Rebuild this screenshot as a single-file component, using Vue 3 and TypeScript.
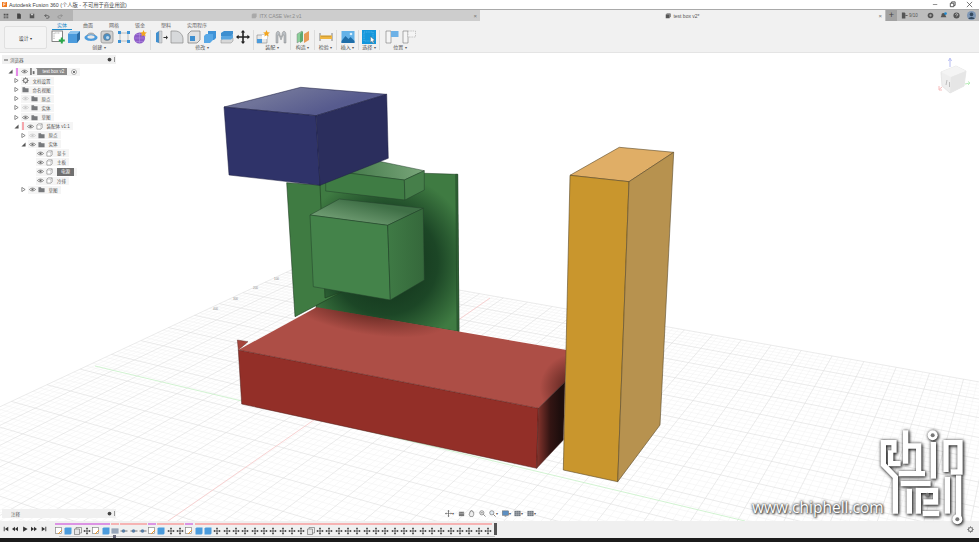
<script setup lang="ts">
type Row = { name: string; depth: number; tri?: 'open' | 'shut'; bar?: string; eye?: 'on' | 'off'; icon: string; cur?: boolean; root?: boolean };
type Group = { label: string; w: number; gap: number; icons: string[]; last?: boolean };
type Seg = { color: string; items: string[] };

// ground grid, projected from two vanishing points
const O = [306, 263];
const VA = [-1805, -110];
const VB = [1100, -110];
const ka = 0.0019;
const kb = 0.00492;

const project = (u: number, v: number) => {
  const w = 1 - u * ka - v * kb;
  const x = (O[0] - u * ka * VA[0] - v * kb * VB[0]) / w;
  const y = (O[1] - u * ka * VA[1] - v * kb * VB[1]) / w;
  return `${x.toFixed(1)} ${y.toFixed(1)}`;
};

let minorGrid = '';
let majorGrid = '';
for (let u = 0; u * ka < 0.97; u++) {
  const seg = `M${project(u, 0)}L${project(u, (0.97 - u * ka) / kb)}`;
  if (u % 5 === 0) majorGrid += seg;
  else minorGrid += seg;
}
for (let v = 0; v * kb < 0.97; v++) {
  const seg = `M${project(0, v)}L${project((0.97 - v * kb) / ka, v)}`;
  if (v % 5 === 0) majorGrid += seg;
  else minorGrid += seg;
}

const ticks = [
  { x: 274, y: 280, t: '100' },
  { x: 253, y: 289, t: '200' },
  { x: 233, y: 300, t: '300' },
  { x: 213, y: 310, t: '400' },
];

const tabs = [
  { name: '实体', w: 26, on: true },
  { name: '曲面', w: 26 },
  { name: '网格', w: 26 },
  { name: '钣金', w: 26 },
  { name: '塑料', w: 26 },
  { name: '实用程序', w: 36 },
];

const groups: Group[] = [
  { label: '创建', w: 103, gap: 2.5, icons: ['sketch', 'extrude', 'revolve', 'hole', 'pattern', 'star'] },
  { label: '修改', w: 103, gap: 2.5, icons: ['press', 'fillet', 'chamfer', 'combine', 'stack', 'move'] },
  { label: '装配', w: 37, gap: 4, icons: ['newcomp', 'joint'] },
  { label: '构造', w: 24, gap: 0, icons: ['plane'] },
  { label: '检验', w: 22, gap: 0, icons: ['measure'] },
  { label: '插入', w: 22, gap: 0, icons: ['picture'] },
  { label: '选择', w: 21, gap: 0, icons: ['select'] },
  { label: '位置', w: 40, gap: 3, icons: ['pos1', 'pos2'], last: true },
];

const rows: Row[] = [
  { name: 'test box v2', depth: 0, tri: 'open', bar: '#e58ae8', eye: 'on', icon: 'doc', root: true },
  { name: '文档设置', depth: 1, tri: 'shut', icon: 'gear' },
  { name: '命名视图', depth: 1, tri: 'shut', icon: 'folder' },
  { name: '原点', depth: 1, tri: 'shut', eye: 'off', icon: 'folder' },
  { name: '实体', depth: 1, tri: 'shut', eye: 'off', icon: 'folder' },
  { name: '草图', depth: 1, tri: 'shut', eye: 'on', icon: 'folder' },
  { name: '装配体 v1:1', depth: 1, tri: 'open', bar: '#f5a6ac', eye: 'on', icon: 'box' },
  { name: '原点', depth: 2, tri: 'shut', eye: 'off', icon: 'folder' },
  { name: '实体', depth: 2, tri: 'open', eye: 'on', icon: 'folder' },
  { name: '显卡', depth: 3, eye: 'on', icon: 'box' },
  { name: '主板', depth: 3, eye: 'on', icon: 'box' },
  { name: '电源', depth: 3, eye: 'on', icon: 'box', cur: true },
  { name: '冷排', depth: 3, eye: 'on', icon: 'box' },
  { name: '草图', depth: 2, tri: 'shut', eye: 'on', icon: 'folder' },
];

const navIcons = [
  { id: 'nav-orbit', caret: true },
  { id: 'nav-pan' },
  { id: 'nav-hand' },
  { id: 'nav-zoom' },
  { id: 'nav-fit', caret: true },
  { id: 'nav-display', caret: true },
  { id: 'nav-grid', caret: true },
  { id: 'nav-grid', caret: true },
];

const moves = (n: number) => Array.from({ length: n }, () => 'tl-move');
const lastMoves = moves(30);
lastMoves[10] = 'tl-box';

const segments: Seg[] = [
  { color: '#dc93e4', items: ['tl-sketch', 'tl-ext', 'tl-box', 'tl-move', 'tl-sketch', 'tl-ext'] },
  { color: '#f6b3b3', items: ['tl-joint'] },
  { color: '#f6b3b3', items: ['tl-arrow', 'tl-arrow', 'tl-arrow'] },
  { color: '#dc93e4', items: ['tl-sketch'] },
  { color: '#f6b3b3', items: ['tl-ext', 'tl-move', 'tl-move'] },
  { color: '#dc93e4', items: ['tl-sketch'] },
  { color: '#f6b3b3', items: ['tl-ext', 'tl-ext', ...lastMoves] },
];
</script>

<template>
  <div class="app">
    <svg class="sprite">
      <symbol id="sketch" viewBox="0 0 14 14">
        <rect x="1" y="1" width="10.5" height="10.5" fill="#fff" stroke="#666" stroke-width=".8" />
        <path d="M3 9V3h6" fill="none" stroke="#888" stroke-width=".7" stroke-dasharray="1 .7" />
        <path d="M9.8 7.5h2v2h2v2h-2v2h-2v-2h-2v-2h2z" fill="#2aa84a" />
      </symbol>
      <symbol id="extrude" viewBox="0 0 14 14">
        <path d="M1 4l3-3h9v8l-3 4H1z" fill="#4b9bdc" />
        <path d="M10 4l3-3v8l-3 4z" fill="#2d6fa8" />
        <path d="M1 4l3-3h9l-3 3z" fill="#8cc4ee" />
      </symbol>
      <symbol id="revolve" viewBox="0 0 14 14">
        <path d="M3 6C3 2 11 2 11 6" fill="#b7bcc2" stroke="#777" stroke-width=".5" />
        <path d="M.5 7.5C.5 3.5 13.5 3.5 13.5 7.5 13.5 12 .5 12 .5 7.5z" fill="#4b9bdc" />
        <ellipse cx="7" cy="7" rx="3.6" ry="1.7" fill="#e8e8e8" />
      </symbol>
      <symbol id="hole" viewBox="0 0 14 14">
        <rect x="1" y="1" width="12" height="12" rx="2" fill="#d2d2d2" stroke="#8a8a8a" stroke-width=".7" />
        <circle cx="7" cy="7" r="3.6" fill="#4b8fc4" stroke="#777" stroke-width=".6" />
        <circle cx="7.6" cy="7.6" r="1.6" fill="#bcd9ee" />
      </symbol>
      <symbol id="pattern" viewBox="0 0 14 14">
        <path d="M3 3h8v8H3z" fill="none" stroke="#999" stroke-width=".6" />
        <path d="M1 1h3v3H1zM10 1h3v3h-3zM1 10h3v3H1zM10 10h3v3h-3z" fill="#3d93d6" />
      </symbol>
      <symbol id="star" viewBox="0 0 14 14">
        <circle cx="6.5" cy="8" r="5.6" fill="#8e5cc9" />
        <path d="M3 4.5h7M1.5 8h10M3 11.5h7M6.5 2.5v11" stroke="#b697e0" stroke-width=".5" />
        <path d="M10.5 0l1 2.2 2.4.3-1.8 1.6.5 2.4-2.1-1.2-2.1 1.2.5-2.4L7.100 2.500l2.400-.3z" fill="#f3a51e" />
      </symbol>
      <symbol id="press" viewBox="0 0 14 14">
        <path d="M2 3l3-2h3v12H5l-3-1z" fill="#3e8fd0" />
        <path d="M5 1h3v12H5z" fill="#cfd3d7" stroke="#888" stroke-width=".4" />
        <path d="M9.500 7h2.500V5.500L14 7.500 12 9.500V8H9.500z" fill="#333" />
      </symbol>
      <symbol id="fillet" viewBox="0 0 14 14">
        <path d="M1 13V1h4c5 0 8 4 8 8v4z" fill="#d7d9db" stroke="#8a8a8a" stroke-width=".7" />
      </symbol>
      <symbol id="chamfer" viewBox="0 0 14 14">
        <path d="M1 4l3-3h9v9l-3 3H1z" fill="#e2e2e2" stroke="#777" stroke-width=".7" />
        <path d="M3 6h5v5H3z" fill="#3e8fd0" />
      </symbol>
      <symbol id="combine" viewBox="0 0 14 14">
        <path d="M5 1h8v7l-2 2H5z" fill="#3e93d8" />
        <path d="M1 6l2-2h7v6l-3 3H1z" fill="#58a8e6" />
      </symbol>
      <symbol id="stack" viewBox="0 0 14 14">
        <path d="M1 10l3-2h9v3l-2 2H1z" fill="#d8d8d8" stroke="#8a8a8a" stroke-width=".5" />
        <path d="M1 6.500l3-2h9v3l-2 2H1z" fill="#5aa6e0" />
        <path d="M1 3l3-2h9v3l-2 2H1z" fill="#3e8fd0" />
      </symbol>
      <symbol id="move" viewBox="0 0 14 14">
        <path d="M7 0l2.200 2.600H7.800V6.200h3.600V4.800L14 7l-2.600 2.200V7.800H7.800v3.600h1.400L7 14l-2.200-2.600h1.400V7.800H2.600v1.400L0 7l2.600-2.200v1.400h3.600V2.600H4.800z" fill="#222" />
      </symbol>
      <symbol id="newcomp" viewBox="0 0 14 14">
        <path d="M1 5h10v8H1z" fill="#e8e8e8" stroke="#888" stroke-width=".6" />
        <path d="M1 9h5v4H1z" fill="#4b9bdc" />
        <path d="M6 5h5v4H6z" fill="#fff" />
        <path d="M10.500 0l1 2.200 2.400.3-1.800 1.600.5 2.400-2.100-1.200-2.100 1.200.5-2.400L7.100 2.500l2.400-.3z" fill="#f3a51e" />
      </symbol>
      <symbol id="joint" viewBox="0 0 14 14">
        <path d="M2 13V5c0-5 4-5 4 0l1 2 1-2c0-5 4-5 4 0v8h-2V5H9L7 10 5 5H4v8z" fill="#b9bec3" stroke="#777" stroke-width=".4" />
      </symbol>
      <symbol id="plane" viewBox="0 0 14 14">
        <path d="M1 4l5-3v9l-5 3z" fill="#8ccf9a" stroke="#777" stroke-width=".4" />
        <path d="M4 4l3-3v10l-3 2z" fill="#5fa872" />
        <path d="M8 4l5-3v9l-5 3z" fill="#e79a57" />
      </symbol>
      <symbol id="measure" viewBox="0 0 14 14">
        <path d="M1 3v8M13 3v8" stroke="#666" stroke-width=".8" />
        <rect x="1" y="5.500" width="12" height="3.500" fill="#f0b640" />
        <path d="M3 5.500v1.500M5 5.500v1.500M7 5.500v1.500M9 5.500v1.500M11 5.500v1.500" stroke="#7a5a1a" stroke-width=".5" />
      </symbol>
      <symbol id="picture" viewBox="0 0 14 14">
        <rect x=".5" y="1" width="13" height="12" fill="#64b2e8" />
        <circle cx="10" cy="4" r="1.300" fill="#d8effc" />
        <path d="M.5 11l4-5 3 3 2-2 4 4v2H.5z" fill="#1f6ea9" />
      </symbol>
      <symbol id="select" viewBox="0 0 14 14">
        <rect x="0" y="0" width="14" height="14" fill="#1497dc" />
        <rect x="2" y="2" width="9" height="9" fill="none" stroke="#8fd3f5" stroke-width=".5" stroke-dasharray="1 .8" />
        <path d="M8.500 6.500l4.500 4-2 .2 1 2.300-1 .5-1-2.300-1.500 1.300z" fill="#fff" stroke="#333" stroke-width=".3" />
      </symbol>
      <symbol id="pos1" viewBox="0 0 14 14">
        <path d="M1 1h5v12H1z" fill="#f5f5f5" stroke="#777" stroke-width=".6" />
        <path d="M6 1h7.500v6H6z" fill="#6db1e6" />
      </symbol>
      <symbol id="pos2" viewBox="0 0 14 14">
        <path d="M1 1h5v12H1z" fill="#f5f5f5" stroke="#777" stroke-width=".6" />
        <path d="M6 1h7.500v6H6z" fill="#f5f5f5" stroke="#999" stroke-width=".5" stroke-dasharray="1.500 .8" />
      </symbol>
      <symbol id="eye" viewBox="0 0 8 8">
        <path d="M.5 4C2 1.800 6 1.800 7.500 4 6 6.200 2 6.200.5 4z" fill="none" stroke="#666" stroke-width=".8" />
        <circle cx="4" cy="4" r="1.200" fill="#666" />
      </symbol>
      <symbol id="eye-off" viewBox="0 0 8 8">
        <path d="M.5 4C2 1.800 6 1.800 7.500 4 6 6.200 2 6.200.5 4z" fill="none" stroke="#c4c4c4" stroke-width=".8" />
        <circle cx="4" cy="4" r="1.200" fill="#c4c4c4" />
      </symbol>
      <symbol id="folder" viewBox="0 0 8 8">
        <path d="M.5 1.500h2.800l.7 1h3.500v4.500H.5z" fill="#77797c" />
      </symbol>
      <symbol id="gear" viewBox="0 0 8 8">
        <circle cx="4" cy="4" r="2.300" fill="none" stroke="#777" stroke-width="1.200" />
        <path d="M4 0v8M0 4h8M1.200 1.200l5.600 5.600M6.800 1.200L1.200 6.800" stroke="#777" stroke-width=".8" stroke-dasharray="1.100 5.800" />
      </symbol>
      <symbol id="box" viewBox="0 0 8 8">
        <path d="M1 2.500L2.500 1H7v4.500L5.500 7H1z" fill="#fff" stroke="#666" stroke-width=".6" />
        <path d="M1 2.500h4.500V7M5.500 2.500L7 1" fill="none" stroke="#888" stroke-width=".4" />
      </symbol>
      <symbol id="doc" viewBox="0 0 8 8">
        <path d="M1 0h4.500L7 1.500V8H1z" fill="#f4f4f4" />
        <path d="M2 3.500h2V7H2z" fill="#6d6d6d" />
      </symbol>
      <symbol id="nav-orbit" viewBox="0 0 8 8">
        <path d="M4 0l1.200 1.500H4.400v2.100h2.100v-.8L8 4 6.500 5.200v-.8H4.400v2.100h.8L4 8 2.800 6.500h.8V4.400H1.500v.8L0 4l1.500-1.200v.8h2.100V1.500h-.8z" fill="#555" />
      </symbol>
      <symbol id="nav-pan" viewBox="0 0 8 8">
        <rect x="1" y="2" width="6" height="5" fill="#777" />
        <path d="M2 1v2M6 1v2M1 4.200h6" stroke="#ddd" stroke-width=".5" />
      </symbol>
      <symbol id="nav-hand" viewBox="0 0 8 8">
        <path d="M2 4V2.200h.8v-1h.9v-.5h.9v.7h.9v1H6.500V5.500L5.500 7.500h-3L1 4.500z" fill="#eee" stroke="#555" stroke-width=".6" />
      </symbol>
      <symbol id="nav-zoom" viewBox="0 0 8 8">
        <circle cx="3.200" cy="3.200" r="2.400" fill="#eee" stroke="#666" stroke-width=".7" />
        <path d="M5 5l2.500 2.500M2 3.200h2.400" stroke="#666" stroke-width=".8" />
      </symbol>
      <symbol id="nav-fit" viewBox="0 0 8 8">
        <circle cx="3.200" cy="3.200" r="2.400" fill="#dfe9f2" stroke="#666" stroke-width=".7" />
        <path d="M5 5l2.500 2.500" stroke="#666" stroke-width=".9" />
      </symbol>
      <symbol id="nav-display" viewBox="0 0 8 8">
        <rect x=".5" y="1" width="7" height="5" fill="#5d8fc2" stroke="#555" stroke-width=".5" />
        <path d="M3 7h2" stroke="#555" stroke-width=".8" />
      </symbol>
      <symbol id="nav-grid" viewBox="0 0 8 8">
        <rect x=".5" y="1" width="7" height="6" fill="#6d7680" />
        <path d="M.5 3h7M.5 5h7M3 1v6M5 1v6" stroke="#ddd" stroke-width=".35" />
      </symbol>
      <symbol id="tl-sketch" viewBox="0 0 8 8">
        <rect x=".5" y=".5" width="6" height="6" fill="#fff" stroke="#777" stroke-width=".6" />
        <path d="M3 7l4-4" stroke="#ef9a2d" stroke-width="1" />
      </symbol>
      <symbol id="tl-ext" viewBox="0 0 8 8">
        <path d="M.5 1.500l1-1h6v6l-1 1h-6z" fill="#4b9bdc" />
      </symbol>
      <symbol id="tl-box" viewBox="0 0 8 8">
        <path d="M.5 2h5v5.500h-5z" fill="#e6e6e6" stroke="#666" stroke-width=".6" />
        <path d="M2 2V.5h5.500V6H5.500" fill="none" stroke="#666" stroke-width=".6" />
      </symbol>
      <symbol id="tl-move" viewBox="0 0 8 8">
        <path d="M4 .5v7M.5 4h7M3 1.500h2M3 6.500h2M1.500 3v2M6.500 3v2" stroke="#444" stroke-width=".8" />
      </symbol>
      <symbol id="tl-joint" viewBox="0 0 8 8">
        <rect x=".5" y="1.500" width="7" height="5" fill="#7c8fa8" />
        <path d="M.5 3h7M.5 5h7" stroke="#e8e8e8" stroke-width=".5" />
      </symbol>
      <symbol id="tl-arrow" viewBox="0 0 8 8">
        <path d="M.5 4h7" stroke="#555" stroke-width=".8" />
        <circle cx="3.500" cy="4" r="1.700" fill="#5a7fa6" />
      </symbol>
      <symbol id="ctl-first" viewBox="0 0 8 8"><path d="M1 1h1.200v6H1zM7 1v6L2.500 4z" fill="#333" /></symbol>
      <symbol id="ctl-prev" viewBox="0 0 8 8"><path d="M4 1v6L0 4zM8 1v6L4 4z" fill="#333" /></symbol>
      <symbol id="ctl-play" viewBox="0 0 8 8"><path d="M1.500 .5v7L7.500 4z" fill="#333" /></symbol>
      <symbol id="ctl-next" viewBox="0 0 8 8"><path d="M0 1v6l4-3zM4 1v6l4-3z" fill="#333" /></symbol>
      <symbol id="ctl-last" viewBox="0 0 8 8"><path d="M1 1v6l4.500-3zM5.800 1H7v6H5.800z" fill="#333" /></symbol>
    </svg>

    <header class="titlebar">
      <svg class="app-logo" viewBox="0 0 6 6"><rect width="6" height="6" fill="#f0781e" /><path d="M2 5V1h2.500M2 3h2" stroke="#fff" stroke-width=".8" fill="none" /></svg>
      <span class="title-text">Autodesk Fusion 360 (个人版 - 不可用于商业用途)</span>
      <div class="win-btns">
        <svg viewBox="0 0 8 8"><path d="M1 4h5" stroke="#666" stroke-width=".8" /></svg>
        <svg viewBox="0 0 8 8"><path d="M1.500 2.500h4v4h-4zM3 2.500V1h4v4H5.500" fill="none" stroke="#333" stroke-width=".9" /></svg>
        <svg viewBox="0 0 8 8"><path d="M1 1l6 6M7 1l-6 6" stroke="#444" stroke-width=".8" /></svg>
      </div>
    </header>

    <div class="tabbar">
      <div class="qa">
        <svg viewBox="0 0 8 8"><path d="M1 1h1.500v1.500H1zM3.300 1h1.500v1.500H3.300zM5.500 1H7v1.500H5.500zM1 3.300h1.500v1.500H1zM3.300 3.300h1.500v1.500H3.300zM5.500 3.300H7v1.500H5.500zM1 5.500h1.500V7H1zM3.300 5.500h1.500V7H3.300zM5.500 5.500H7V7H5.500z" fill="#444" /></svg>
        <svg viewBox="0 0 8 8" class="qa-file"><path d="M1.500 .5h3.500L6.500 2v5.500h-5z" fill="#444" /></svg>
        <svg viewBox="0 0 8 8" class="qa-save"><rect x="1" y="1" width="6" height="6" fill="#555" /><rect x="2.500" y="1" width="3" height="2" fill="#ccc" /></svg>
        <svg viewBox="0 0 8 8" class="qa-undo"><path d="M1 3.500h4c2.500 0 2.500 3.500 0 3.500H3M3 1.500L1 3.500l2 2" fill="none" stroke="#444" stroke-width=".9" /></svg>
        <svg viewBox="0 0 8 8" class="qa-redo"><path d="M7 3.500H3C.5 3.500.5 7 3 7h2M5 1.500l2 2-2 2" fill="none" stroke="#888" stroke-width=".9" /></svg>
      </div>
      <div class="doc-tab">
        <svg class="doc-ico" viewBox="0 0 8 8"><path d="M1 2l1.500-1.500h5v4L6 7H1z" fill="#a9a9a9" /></svg>
        <span>ITX CASE Ver.2 v1</span>
        <i class="tab-x">×</i>
      </div>
      <div class="doc-tab doc-tab--on">
        <svg class="doc-ico" viewBox="0 0 8 8"><path d="M1 2l1.500-1.500h5v4L6 7H1z" fill="#555" /><path d="M1 2h5v5M6 2l1.500-1.500" fill="none" stroke="#ddd" stroke-width=".4" /></svg>
        <span>test box v2*</span>
        <i class="tab-x">×</i>
      </div>
      <div class="right-tools">
        <span class="plus">+</span>
        <svg class="rt rt-job" viewBox="0 0 8 8"><path d="M1 .5h3l1 1v6H1z" fill="#555" /><path d="M5 4h2.500" stroke="#555" /></svg>
        <span class="job-num">9/10</span>
        <svg class="rt rt-a" viewBox="0 0 8 8"><circle cx="4" cy="4" r="3.200" fill="#555" /><circle cx="4" cy="4" r="1.300" fill="#aaa" /></svg>
        <svg class="rt rt-b" viewBox="0 0 8 8"><path d="M4 1c2 0 2.300 1.500 2.300 3L7.300 6H.7l1-2C1.700 2.500 2 1 4 1z" fill="#555" /><circle cx="6.300" cy="1.800" r="1.500" fill="#1f8ad0" /></svg>
        <svg class="rt rt-c" viewBox="0 0 8 8"><circle cx="4" cy="4" r="3.500" fill="#555" /><path d="M2.800 3c.2-1.300 2.500-1.300 2.500 0 0 1-1.300 1-1.300 2" fill="none" stroke="#eee" stroke-width=".8" /></svg>
        <svg class="rt rt-d" viewBox="0 0 10 10"><circle cx="5" cy="5" r="5" fill="#7f97b5" /><circle cx="5" cy="3.800" r="2" fill="#34495f" /><path d="M1.500 9c.5-3 6.500-3 7 0z" fill="#34495f" /></svg>
      </div>
    </div>

    <div class="ribbon">
      <button class="design-btn">设计 <i class="caret">▾</i></button>
      <div class="ribbon-main">
        <div class="ribbon-tabs">
          <span v-for="t in tabs" :key="t.name" class="r-tab" :class="{ 'r-tab--on': t.on }" :style="{ width: t.w + 'px' }">{{ t.name }}</span>
        </div>
        <div class="ribbon-groups">
          <div v-for="g in groups" :key="g.label" class="r-group" :class="{ 'r-group--last': g.last }" :style="{ width: g.w + 'px' }">
            <div class="r-icons" :style="{ gap: g.gap + 'px' }">
              <svg v-for="ic in g.icons" :key="ic" class="r-icon"><use :href="'#' + ic" /></svg>
            </div>
            <div class="r-label">{{ g.label }} <i class="caret">▾</i></div>
          </div>
        </div>
      </div>
    </div>

    <main class="viewport">
      <svg class="scene" viewBox="0 53 979 468">
        <defs>
          <linearGradient id="blueTop" gradientUnits="userSpaceOnUse" x1="300" y1="87" x2="310" y2="115">
            <stop offset="0" stop-color="#6f7399" />
            <stop offset="1" stop-color="#575b8e" />
          </linearGradient>
          <radialGradient id="plateShade" gradientUnits="userSpaceOnUse" cx="385" cy="262" r="88">
            <stop offset="0" stop-color="#0f2c17" />
            <stop offset=".6" stop-color="#1c4626" />
            <stop offset="1" stop-color="#3f7b42" />
          </radialGradient>
          <linearGradient id="barTop" gradientUnits="userSpaceOnUse" x1="350" y1="180" x2="424" y2="170">
            <stop offset="0" stop-color="#44794a" />
            <stop offset="1" stop-color="#7aa77b" />
          </linearGradient>
          <linearGradient id="cubeTop" gradientUnits="userSpaceOnUse" x1="355" y1="200" x2="350" y2="222">
            <stop offset="0" stop-color="#3f6f46" />
            <stop offset="1" stop-color="#6d9a70" />
          </linearGradient>
          <linearGradient id="cubeRight" gradientUnits="userSpaceOnUse" x1="388" y1="250" x2="424" y2="250">
            <stop offset="0" stop-color="#3f7a45" />
            <stop offset="1" stop-color="#35683b" />
          </linearGradient>
          <radialGradient id="redShadeL" gradientUnits="userSpaceOnUse" cx="0" cy="0" r="1" gradientTransform="translate(365 308) rotate(10) scale(85 26)">
            <stop offset="0" stop-color="#3a120c" stop-opacity=".7" />
            <stop offset="1" stop-color="#3a120c" stop-opacity="0" />
          </radialGradient>
          <radialGradient id="redShadeR" gradientUnits="userSpaceOnUse" cx="574" cy="388" r="34">
            <stop offset="0" stop-color="#2a0c08" stop-opacity=".75" />
            <stop offset="1" stop-color="#2a0c08" stop-opacity="0" />
          </radialGradient>
          <linearGradient id="redRight" gradientUnits="userSpaceOnUse" x1="538" y1="420" x2="560" y2="420">
            <stop offset="0" stop-color="#80322b" />
            <stop offset=".55" stop-color="#331513" />
            <stop offset="1" stop-color="#1e0e0d" />
          </linearGradient>
        </defs>

        <path :d="minorGrid" stroke="#f1f1f1" stroke-width=".5" fill="none" />
        <path :d="majorGrid" stroke="#dedede" stroke-width=".6" fill="none" />
        <path d="M95 366L745 521" stroke="#c6f0c6" stroke-width=".8" fill="none" />
        <path d="M168 521L490 298" stroke="#f6c6c6" stroke-width=".8" fill="none" />
        <text v-for="t in ticks" :key="t.t" :x="t.x" :y="t.y" class="tick">{{ t.t }}</text>

        <!-- green plate and parts -->
        <polygon points="320,170 457.700,174.300 459,331.700 316,308" fill="url(#plateShade)" stroke="#1c3a20" stroke-width=".5" />
        <polygon points="455.700,174.300 457.700,174.300 459,331.700 457,331" fill="#2f6235" stroke="#1c3a20" stroke-width=".4" />
        <polygon points="286.700,182.700 320,185 325,298 341.700,292 295,316.700" fill="#3f7b42" stroke="#1d3a20" stroke-width=".6" />
        <polygon points="340,172 373,160 424.300,170.700 404.300,180" fill="url(#barTop)" stroke="#22402a" stroke-width=".5" />
        <polygon points="325.700,170.300 404.300,180 405,200 325.700,191" fill="#3f7c44" stroke="#22402a" stroke-width=".5" />
        <polygon points="404.300,180 424.300,170.700 424.300,190 405,200" fill="#467f4a" stroke="#22402a" stroke-width=".5" />
        <polygon points="310,215 339.300,199 423.300,208.300 387.700,225.300" fill="url(#cubeTop)" stroke="#22402a" stroke-width=".5" />
        <polygon points="310,215 387.700,225.300 390.300,300 313.300,286.700" fill="#44834a" stroke="#22402a" stroke-width=".5" />
        <polygon points="387.700,225.300 423.300,208.300 424.300,280 390.300,300" fill="url(#cubeRight)" stroke="#22402a" stroke-width=".5" />

        <!-- blue -->
        <polygon points="224,107 300.700,87.300 386.700,94.300 316,115.700" fill="url(#blueTop)" stroke="#1d1f40" stroke-width=".5" />
        <polygon points="224,107 316,115.700 320,185.300 229,175" fill="#2f3369" stroke="#1d1f40" stroke-width=".5" />
        <polygon points="316,115.700 386.700,94.300 388.300,158.300 320,185.300" fill="#2b2e5d" stroke="#1d1f40" stroke-width=".5" />

        <!-- red -->
        <polygon points="237.300,340 248,341.700 238.300,350" fill="#a5453c" stroke="#50201c" stroke-width=".4" />
        <polygon points="238.300,350 316.700,307.300 566.700,350 565,381.700 538.300,408.300" fill="#ad4e46" />
        <polygon points="238.300,350 316.700,307.300 566.700,350 565,381.700 538.300,408.300" fill="url(#redShadeL)" />
        <polygon points="238.300,350 316.700,307.300 566.700,350 565,381.700 538.300,408.300" fill="url(#redShadeR)" />
        <polygon points="238.300,350 538.300,408.300 536.700,468.300 241.700,404" fill="#932f28" stroke="#4e1c18" stroke-width=".5" />
        <polygon points="538.300,408.300 565,381.700 563.300,440 536.700,468.300" fill="url(#redRight)" stroke="#3a1512" stroke-width=".4" />

        <!-- yellow -->
        <polygon points="570,175.300 619.300,147.300 673.700,152.300 629,181.700" fill="#e0ae66" stroke="#5b4a2a" stroke-width=".6" />
        <polygon points="570,175.300 629,181.700 617.700,481.700 563.300,470" fill="#c9962d" stroke="#5b4a2a" stroke-width=".6" />
        <polygon points="629,181.700 673.700,152.300 660,425 617.700,481.700" fill="#b7924f" stroke="#5b4a2a" stroke-width=".6" />

        <!-- view cube -->
        <path d="M950 67V59M948.500 61l1.500-3 1.500 3" stroke="#b6bcf2" stroke-width="1" fill="none" />
        <path d="M942 87l-3 2.500M939 86v4h3" stroke="#f7bcbc" stroke-width="1" fill="none" />
        <path d="M965 84l5-1M968 81.500l2 1.500-2 2" stroke="#bdeebd" stroke-width="1" fill="none" />
        <polygon points="941,72 956,66 966,71 964,86 950,93 942,86" fill="#eeeeee" stroke="#e2e2e2" stroke-width=".8" />
        <polygon points="941,72 956,66 966,71 951,77" fill="#f4f4f4" />
        <polygon points="951,77 966,71 964,86 950,93" fill="#e6e6e6" />
        <path d="M947 80l-1 5M949.500 82v5" stroke="#b8b8b8" stroke-width=".9" />
      </svg>

      <section class="panel panel--browser">
        <div class="panel-head">
          <svg class="head-pin" viewBox="0 0 8 8"><path d="M0 3h8v2H0z" fill="#555" /></svg>
          <span>浏览器</span>
          <svg class="head-dot" viewBox="0 0 8 8"><circle cx="4" cy="4" r="3" fill="#444" /></svg>
          <i class="head-end"></i>
        </div>
        <div class="tree">
          <div v-for="(r, i) in rows" :key="i" class="row" :class="'d' + r.depth">
            <svg v-if="r.tri" class="tri" viewBox="0 0 6 6">
              <path v-if="r.tri === 'shut'" d="M1 .5L5 3 1 5.500z" fill="#fff" stroke="#444" stroke-width=".7" />
              <path v-else d="M5.500 .5v5H.5z" fill="#555" />
            </svg>
            <div class="row-body">
              <i v-if="r.bar" class="row-bar" :style="{ background: r.bar }"></i>
              <svg v-if="r.eye" class="r-ic"><use :href="r.eye === 'on' ? '#eye' : '#eye-off'" /></svg>
              <div class="row-label" :class="{ 'row-label--root': r.root, 'row-label--cur': r.cur }">
                <svg class="r-ic"><use :href="'#' + r.icon" /></svg>
                <span>{{ r.name }}</span>
              </div>
              <svg v-if="r.root" class="target" viewBox="0 0 8 8"><circle cx="4" cy="4" r="3.300" fill="#fff" stroke="#666" stroke-width=".7" /><circle cx="4" cy="4" r="1.300" fill="#444" /></svg>
            </div>
          </div>
        </div>
      </section>

      <section class="panel panel--comments">
        <div class="panel-head">
          <span class="head-pad">注释</span>
          <svg class="head-dot" viewBox="0 0 8 8"><circle cx="4" cy="4" r="3" fill="#444" /></svg>
          <i class="head-end"></i>
        </div>
      </section>

      <nav class="navbar">
        <span v-for="(n, i) in navIcons" :key="i" class="nav-item">
          <svg class="nav-ic"><use :href="'#' + n.id" /></svg>
          <i v-if="n.caret" class="caret">▾</i>
        </span>
      </nav>
    </main>

    <footer class="timeline">
      <div class="controls">
        <svg v-for="c in ['first', 'prev', 'play', 'next', 'last']" :key="c" class="ctl"><use :href="'#ctl-' + c" /></svg>
      </div>
      <div class="track">
        <div class="track-items">
          <div v-for="(s, i) in segments" :key="i" class="seg">
            <i class="seg-bar" :style="{ background: s.color }"></i>
            <div class="seg-icons">
              <svg v-for="(it, j) in s.items" :key="j" class="tl-ic"><use :href="'#' + it" /></svg>
            </div>
          </div>
          <i class="marker"></i>
        </div>
        <div class="baseline"><i class="base-dot"></i></div>
      </div>
      <svg class="tl-gear"><use href="#gear" /></svg>
    </footer>
    <div class="taskbar"></div>

    <div class="mark-text">www.chiphell.com</div>
    <svg class="mark-logo" viewBox="0 0 327 330">
      <g fill="none" stroke="#fff" stroke-width="16">
        <path d="M72 92V62H40V128L76 165V275" />
        <path d="M62 85V125H92" />
        <path d="M107 25V125M107 72H146V150M86 155H165" />
        <path d="M190 60V170" />
        <path d="M228 150V62H270V150H242" />
        <path d="M92 185H182M118 200V275" />
        <path d="M145 275V205H197V240H160M158 275H208" />
        <path d="M232 165V275" />
        <path d="M266 160V285" />
      </g>
      <circle cx="188" cy="40" r="15" fill="#fff" />
      <circle cx="188" cy="40" r="6" fill="#777" />
      <circle cx="172" cy="218" r="6" fill="#777" />
      <circle cx="262" cy="292" r="15" fill="#fff" />
      <circle cx="262" cy="292" r="6" fill="#777" />
    </svg>
  </div>
</template>

<style scoped>
.app {
  position: relative;
  width: 979px;
  height: 542px;
  overflow: hidden;
  display: flex;
  flex-direction: column;
  font-family: "Liberation Sans", "Noto Sans CJK SC", sans-serif;
  font-size: 5px;
  color: #555;
}

.sprite {
  display: none;
}

i {
  font-style: normal;
}

.titlebar {
  height: 9px;
  background: #fff;
  display: flex;
  align-items: center;
  padding-left: 2px;
}

.app-logo {
  width: 5px;
  height: 5px;
  margin-right: 2px;
}

.title-text {
  font-size: 5.3px;
  color: #444;
}

.win-btns {
  margin-left: auto;
  display: flex;
  gap: 10px;
  padding-right: 6px;
}

.win-btns svg {
  width: 7px;
  height: 7px;
}

.tabbar {
  height: 12px;
  background: #bdbdbd;
  border-top: 1px solid #a9a9a9;
  display: flex;
  box-sizing: border-box;
}

.qa {
  width: 73px;
  display: flex;
  align-items: center;
  padding-left: 3px;
  box-sizing: border-box;
  background: #b4b4b4;
  gap: 7px;
}

.qa svg {
  width: 6px;
  height: 6px;
}

.qa-undo {
  margin-left: 2px;
}

.doc-tab {
  width: 407px;
  display: flex;
  align-items: center;
  justify-content: center;
  gap: 2px;
  position: relative;
  background: #cdcdcd;
  color: #8a8a8a;
}

.doc-tab--on {
  width: 405px;
  background: #f1f1f1;
  color: #555;
  z-index: 1;
}

.doc-ico {
  width: 6px;
  height: 6px;
}

.tab-x {
  position: absolute;
  right: 3px;
  font-size: 6px;
  color: #777;
}

.right-tools {
  flex: 1;
  display: flex;
  align-items: center;
}

.plus {
  width: 11px;
  height: 11px;
  background: #a2a2a2;
  color: #444;
  font-size: 9px;
  line-height: 10px;
  text-align: center;
  margin-right: 4px;
  margin-left: 1px;
}

.rt {
  width: 7px;
  height: 7px;
  flex: none;
}

.job-num {
  font-size: 4.500px;
  margin-left: 1px;
  width: 11px;
}

.rt-a {
  margin-left: 7px;
}

.rt-b {
  margin-left: 6px;
}

.rt-c {
  margin-left: 6px;
}

.rt-d {
  width: 9px;
  height: 9px;
  margin-left: 7px;
}

.ribbon {
  height: 32px;
  background: #f1f1f1;
  border-bottom: 1px solid #e4e4e4;
  box-sizing: border-box;
  display: flex;
  padding-left: 4px;
}

.design-btn {
  width: 43px;
  height: 23px;
  margin-top: 5px;
  margin-right: 1px;
  border: 1px solid #e0e0e0;
  border-radius: 2px;
  background: #f4f4f4;
  font: inherit;
  color: #333;
  padding: 0;
}

.caret {
  font-size: 4px;
}

.ribbon-main {
  display: flex;
  flex-direction: column;
}

.ribbon-tabs {
  display: flex;
  height: 9px;
  padding-left: 1px;
}

.r-tab {
  text-align: center;
  line-height: 8px;
  color: #666;
  box-sizing: border-box;
}

.r-tab--on {
  color: #1e88c8;
  border-bottom: 1px solid #1e88c8;
  margin: 0 3px;
  flex: none;
  width: 20px !important;
}

.ribbon-groups {
  display: flex;
  height: 22px;
}

.r-group {
  flex: none;
  display: flex;
  flex-direction: column;
  align-items: center;
  border-right: 1px solid #dcdcdc;
  box-sizing: border-box;
  height: 20px;
}

.r-group--last {
  border-right: none;
}

.r-icons {
  display: flex;
  height: 15px;
  align-items: center;
}

.r-icon {
  width: 14px;
  height: 14px;
  flex: none;
}

.r-label {
  line-height: 7px;
  color: #555;
  white-space: nowrap;
}

.viewport {
  position: relative;
  flex: 1;
  min-height: 0;
  background: #fff;
}

.scene {
  position: absolute;
  inset: 0;
  width: 100%;
  height: 100%;
  display: block;
}

.tick {
  font-size: 3px;
  fill: #888;
  font-family: "Liberation Sans", sans-serif;
}

.panel {
  position: absolute;
  left: 2px;
  width: 114px;
}

.panel--browser {
  top: 2px;
}

.panel--comments {
  top: 456px;
}

.panel-head {
  height: 9px;
  background: #f0f0f0;
  display: flex;
  align-items: center;
  color: #666;
  font-size: 4.500px;
}

.head-pin {
  width: 4px;
  height: 4px;
  margin: 0 2px;
}

.head-pad {
  margin-left: 9px;
}

.head-dot {
  width: 5px;
  height: 5px;
  margin-left: auto;
  margin-right: 2px;
}

.head-end {
  width: 1px;
  height: 5px;
  background: #999;
  margin-right: 1px;
}

.tree {
  padding-top: 3px;
  display: flex;
  flex-direction: column;
}

.row {
  height: 9.100px;
  display: flex;
  align-items: center;
  font-size: 4.500px;
}

.d0 {
  padding-left: 5.500px;
}

.d1 {
  padding-left: 11.500px;
}

.d2 {
  padding-left: 18.500px;
}

.d3 {
  padding-left: 34px;
}

.tri {
  width: 5px;
  height: 5px;
  flex: none;
  margin-right: 2px;
}

.row-body {
  display: flex;
  align-items: center;
  height: 8px;
  gap: 2px;
  background: #f5f5f5;
  padding: 0 3px 0 1px;
}

.row-bar {
  width: 2px;
  height: 8px;
  margin-right: 1px;
}

.r-ic {
  width: 7px;
  height: 7px;
  flex: none;
}

.row-label {
  display: flex;
  align-items: center;
  gap: 4px;
}

.row-label--root {
  background: #8a8a8a;
  color: #fff;
  padding: 0 3px 0 1px;
  height: 7px;
  gap: 5px;
}

.row-label--cur span {
  background: #6f6f6f;
  color: #fff;
  padding: 0 4px;
  line-height: 8px;
}

.target {
  width: 6px;
  height: 6px;
  margin-left: 2px;
}

.navbar {
  position: absolute;
  left: 445px;
  top: 456px;
  display: flex;
  gap: 3.500px;
  align-items: center;
  height: 9px;
}

.nav-item {
  display: flex;
  align-items: center;
}

.nav-ic {
  width: 7px;
  height: 7px;
  display: block;
}

.timeline {
  height: 17px;
  background: #f0f0f0;
  display: flex;
  position: relative;
  flex: none;
}

.controls {
  width: 55px;
  display: flex;
  gap: 3.400px;
  padding: 5px 0 0 3px;
  box-sizing: border-box;
}

.ctl {
  width: 6px;
  height: 6px;
}

.track {
  display: flex;
  flex-direction: column;
  padding-top: 2px;
}

.track-items {
  display: flex;
  gap: 1.300px;
  position: relative;
}

.seg-bar {
  display: block;
  height: 2px;
}

.seg-icons {
  display: flex;
  gap: 1.330px;
  padding: 2px 0 0 0;
}

.tl-ic {
  width: 8px;
  height: 8px;
  flex: none;
}

.marker {
  width: 3px;
  height: 12px;
  background: #555;
  margin-left: 1px;
}

.baseline {
  height: 1px;
  margin: 1px 2px 0 4px;
  background: #c4c4c4;
  position: relative;
}

.base-dot {
  position: absolute;
  left: 54px;
  top: -1px;
  width: 3px;
  height: 3px;
  background: #667;
}

.tl-gear {
  width: 7px;
  height: 7px;
  position: absolute;
  right: 5px;
  top: 5px;
}

.taskbar {
  height: 4px;
  background: #1b1b1b;
  flex: none;
}

.mark-text {
  position: absolute;
  left: 752px;
  top: 497px;
  font-family: "Open Sans", sans-serif;
  font-size: 15.500px;
  line-height: 20px;
  color: #fff;
  white-space: nowrap;
  text-shadow: 0 0 2px #444, 0 0 3px #555, 1px 1px 2px #333;
}

.mark-logo {
  position: absolute;
  left: 870px;
  top: 422px;
  width: 109px;
  height: 110px;
  filter: drop-shadow(1px 1px 1.500px rgba(0, 0, 0, 0.8)) drop-shadow(0 0 1.500px rgba(0, 0, 0, 0.5));
}
</style>

<style>
html,
body {
  margin: 0;
  background: #fff;
  overflow: hidden;
}
</style>
